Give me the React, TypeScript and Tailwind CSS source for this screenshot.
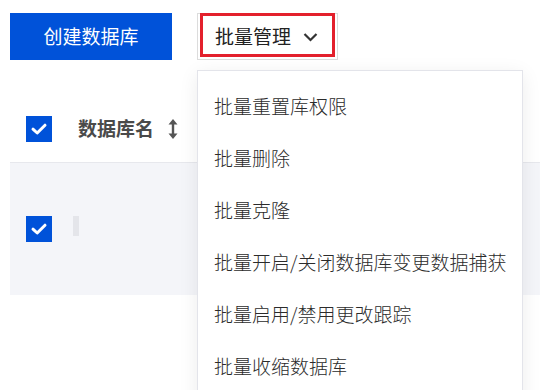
import React from 'react';

const menuItems = [
  '批量重置库权限',
  '批量删除',
  '批量克隆',
  '批量开启/关闭数据库变更数据捕获',
  '批量启用/禁用更改跟踪',
  '批量收缩数据库',
];

function CheckBox() {
  return (
    <span className="flex h-[26px] w-[26px] items-center justify-center bg-[#0052d9]">
      <svg width="18" height="18" viewBox="0 0 18 18" fill="none">
        <path
          d="M3 9.2 L7.2 13 L15 5.2"
          stroke="white"
          strokeWidth="3"
          strokeLinecap="round"
          strokeLinejoin="round"
        />
      </svg>
    </span>
  );
}

export default function App() {
  return (
    <div
      className="relative h-[390px] w-[540px] overflow-hidden bg-white"
      style={{ fontFamily: '"Noto Sans CJK SC", "Noto Sans", sans-serif' }}
    >
      {/* toolbar */}
      <div className="flex items-start gap-[25px] pl-[10px] pt-[13px]">
        <button className="flex h-[47px] w-[162px] items-center justify-center bg-[#0052d9] text-[19px] text-white">
          创建数据库
        </button>
        <div className="relative">
          <button className="flex h-[47px] w-[141px] items-center border border-[#dcdcdc] bg-white pl-[17px] text-[19px] text-[#222]">
            批量管理
            <svg className="ml-[12px]" width="15" height="10" viewBox="0 0 15 10" fill="none">
              <path d="M1.5 2 L7.5 8 L13.5 2" stroke="#333" strokeWidth="2.2" />
            </svg>
          </button>
          <div className="pointer-events-none absolute left-[3px] top-0 h-[44px] w-[135px] border-[3px] border-[#e3202c]" />
        </div>
      </div>

      {/* table */}
      <div className="mt-[35px] pl-[10px]">
        <div className="flex h-[68px] items-center border-b border-[#e7e8ed] pl-[16px]">
          <CheckBox />
          <span className="ml-[26px] text-[19px] font-bold text-[#4a4a4a]">数据库名</span>
          <svg className="ml-[14px]" width="10" height="20" viewBox="0 0 10 20" fill="#555">
            <path d="M5 0 L9.5 5.5 H6.2 V14.5 H9.5 L5 20 L0.5 14.5 H3.8 V5.5 H0.5 Z" />
          </svg>
        </div>
        <div className="flex h-[132px] items-center bg-[#f4f5f9] pl-[16px]">
          <CheckBox />
          <span className="ml-[21px] mb-[6px] h-[20px] w-[6px] bg-[#e4e5ea]" />
        </div>
      </div>

      {/* dropdown menu */}
      <div className="absolute left-[197px] top-[70px] h-[340px] w-[326px] border border-[#e3e4ea] bg-white pt-[9px] shadow-[0_4px_18px_rgba(0,0,0,0.08)]">
        {menuItems.map((item) => (
          <div key={item} className="flex h-[52px] items-center pl-[16px] text-[19px] font-light text-[#2b2b2b]">
            {item}
          </div>
        ))}
      </div>
    </div>
  );
}
